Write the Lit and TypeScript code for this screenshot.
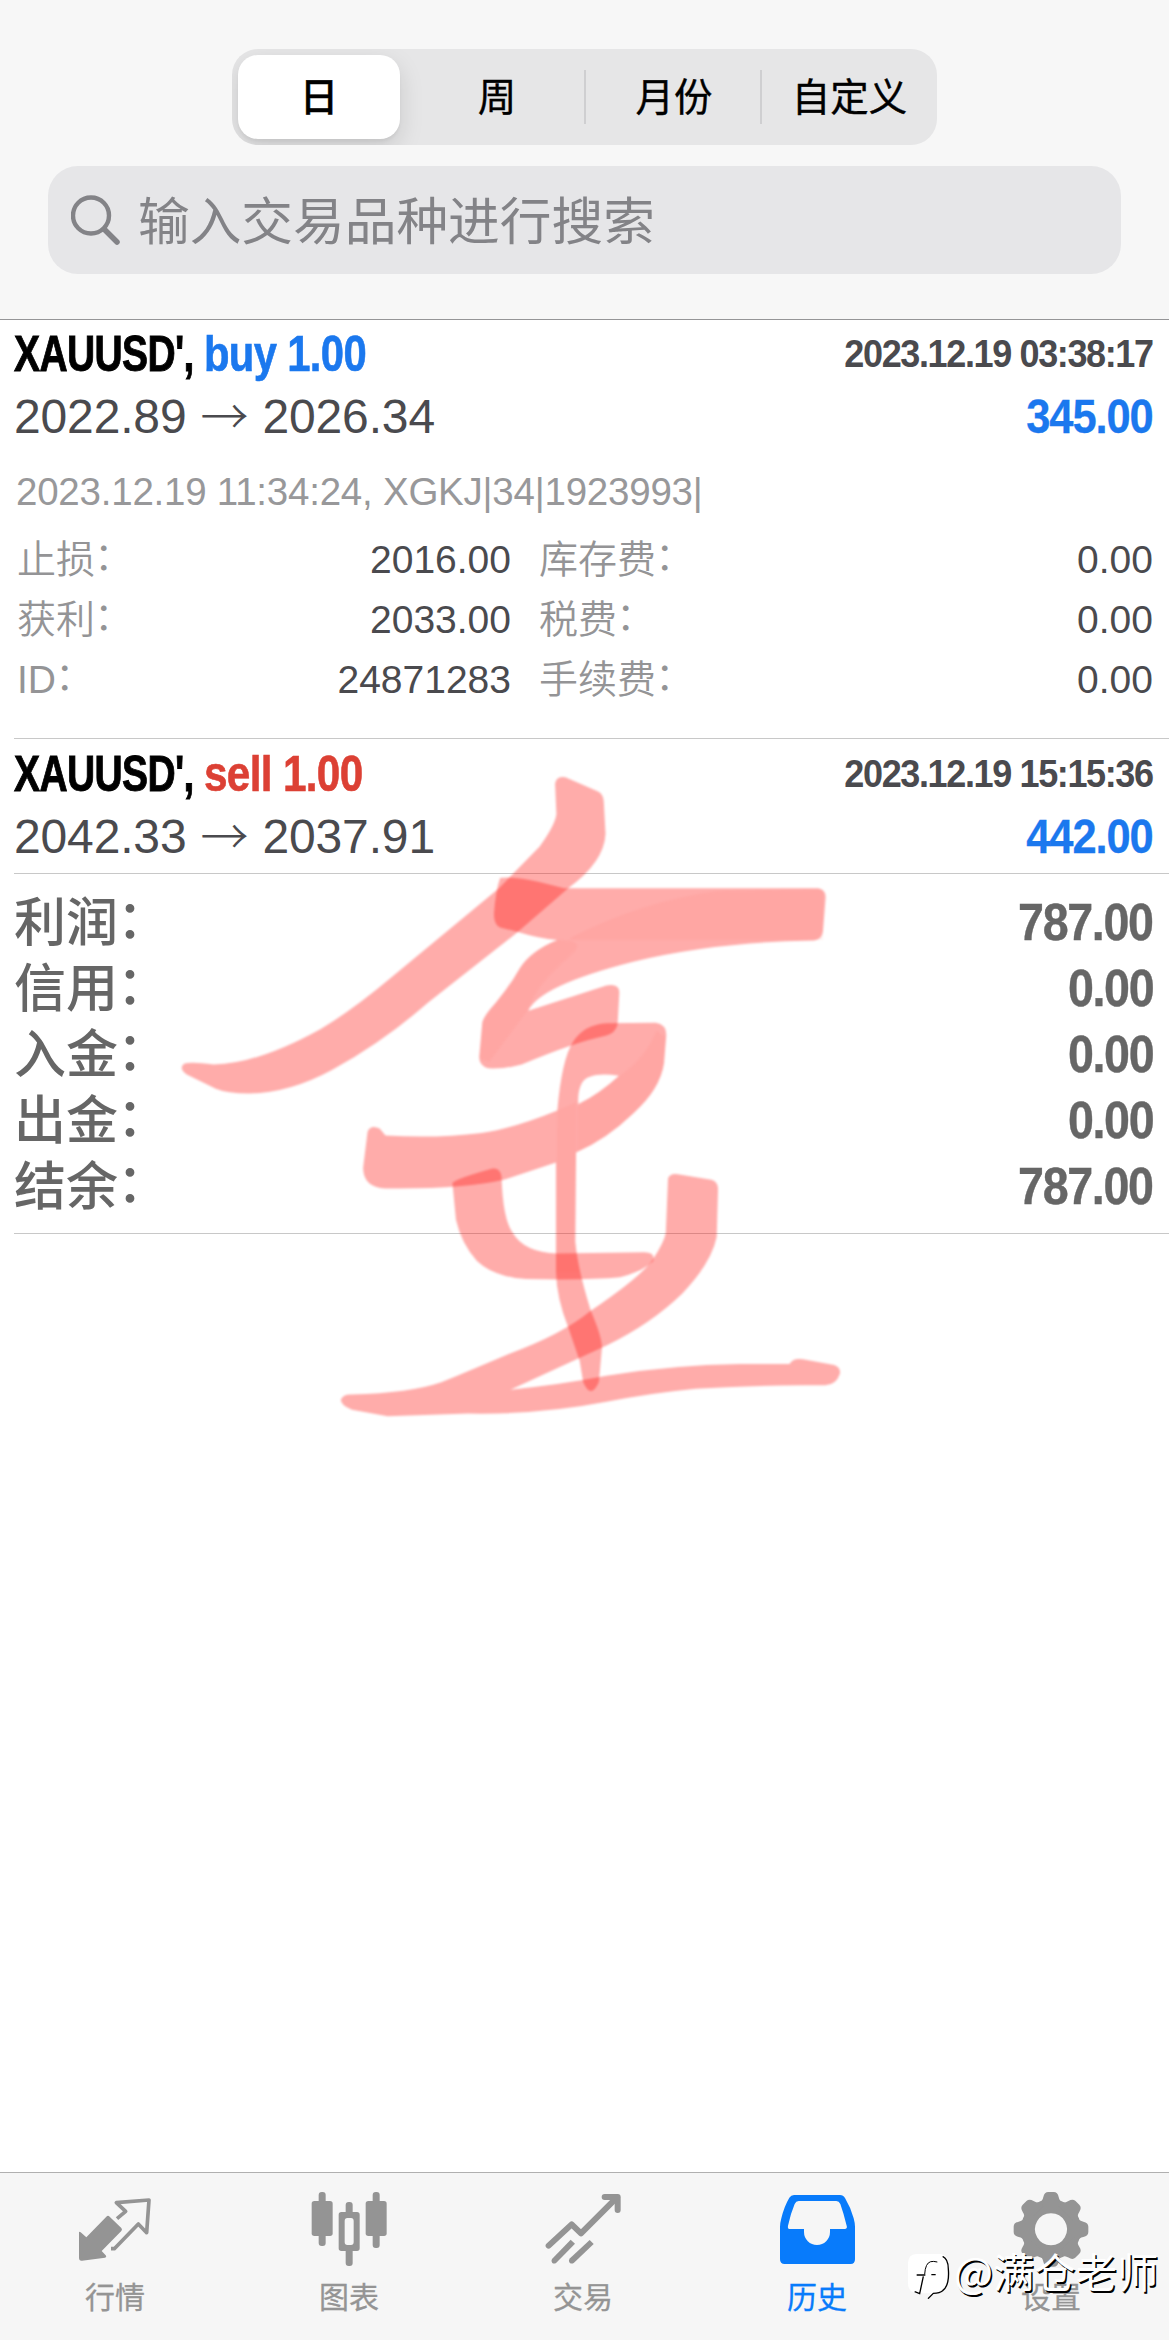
import { LitElement, html, css, svg, nothing, type TemplateResult } from 'lit'
import { customElement, property } from 'lit/decorators.js'
import { classMap } from 'lit/directives/class-map.js'

type Side = 'buy' | 'sell'

interface Deal {
  symbol: string
  side: Side
  volume: string
  open: string
  close: string
  time: string
  profit: string
  comment?: string
  details?: [string, string][]
}

interface Tab {
  label: string
  viewBox: string
  icon: TemplateResult
}

const PERIODS = ['日', '周', '月份', '自定义']

const DEALS: Deal[] = [
  {
    symbol: "XAUUSD',",
    side: 'buy',
    volume: '1.00',
    open: '2022.89',
    close: '2026.34',
    time: '2023.12.19 03:38:17',
    profit: '345.00',
    comment: '2023.12.19 11:34:24, XGKJ|34|1923993|',
    details: [
      ['止损', '2016.00'],
      ['库存费', '0.00'],
      ['获利', '2033.00'],
      ['税费', '0.00'],
      ['ID', '24871283'],
      ['手续费', '0.00'],
    ],
  },
  {
    symbol: "XAUUSD',",
    side: 'sell',
    volume: '1.00',
    open: '2042.33',
    close: '2037.91',
    time: '2023.12.19 15:15:36',
    profit: '442.00',
  },
]

const SUMMARY: [string, string][] = [
  ['利润', '787.00'],
  ['信用', '0.00'],
  ['入金', '0.00'],
  ['出金', '0.00'],
  ['结余', '787.00'],
]

const TABS: Tab[] = [
  {
    label: '行情',
    viewBox: '225 90 240 240',
    icon: svg`
      <path fill="currentColor" d="M237 218 Q237 213 242 217 L259 232 L319 170 Q324 165 329 170 L364 204 Q368 209 364 213 L305 273 L317 286 Q321 291 315 293 L246 302 Q237 303 237 293 Z" />
      <path fill="none" stroke="currentColor" stroke-width="11" stroke-linejoin="round" d="M351 176 L377 154 L349 128 L447 120 L440 218 L415 192 L343 266 H333" />
    `,
  },
  {
    label: '图表',
    viewBox: '928 90 240 240',
    icon: svg`
      <g fill="currentColor">
        <rect x="957" y="96" width="21" height="162" rx="9" />
        <rect x="936" y="123" width="63" height="105" rx="8" />
        <rect x="1119" y="96" width="21" height="168" rx="9" />
        <rect x="1098" y="123" width="63" height="105" rx="8" />
        <rect x="1038" y="126" width="21" height="46" rx="9" />
        <rect x="1038" y="260" width="21" height="58" rx="9" />
        <path fill-rule="evenodd" d="M1025 156 H1072 Q1080 156 1080 164 V265 Q1080 273 1072 273 H1025 Q1017 273 1017 265 V164 Q1017 156 1025 156 Z M1043 174 Q1035 174 1035 183 V246 Q1035 255 1043 255 H1054 Q1062 255 1062 246 V183 Q1062 174 1054 174 Z" />
      </g>
    `,
  },
  {
    label: '交易',
    viewBox: '460 90 240 240',
    icon: svg`
      <g fill="none" stroke="currentColor" stroke-width="18" stroke-linecap="round" stroke-linejoin="round">
        <path d="M477 257 L546 193 L574 220 L682 112" />
        <path d="M645 111 H684 V150" />
      </g>
      <g fill="currentColor">
        <path d="M543 239 L556 251 L500 308 Q494 313 488 309 Q483 303 487 297 Z" />
        <path d="M600 240 L612 252 L553 308 Q546 313 540 308 Q535 302 541 295 Z" />
      </g>
    `,
  },
  {
    label: '历史',
    viewBox: '-9 90 240 240',
    icon: svg`
      <path fill="currentColor" fill-rule="evenodd" d="M42 105 H180 Q190 105 195 114 Q212 142 221 175 Q225 190 225 200 V298 Q225 312 212 312 H14 Q0 312 0 298 V200 Q0 190 4 175 Q12 140 28 113 Q33 105 42 105 Z M56 123 Q48 123 44 132 Q32 160 24 197 Q22 207 30 207 H72 V216 A39 39 0 0 0 150 216 V207 H194 Q203 206 200 197 Q191 160 181 132 Q177 123 169 123 Z" />
    `,
  },
  {
    label: '设置',
    viewBox: '694 90 240 240',
    icon: svg`
      <path fill="none" stroke="currentColor" stroke-width="42" d="M814 139 A69 69 0 1 1 813.9 139 Z" />
      <g fill="currentColor">
        ${[0, 45, 90, 135, 180, 225, 270, 315].map(
          (deg) => svg`
            <path transform="rotate(${deg} 814 208)" d="M780 128 Q788 124 791 111 Q794 96 806 96 H822 Q834 96 837 111 Q840 124 848 128 V142 H780 Z" />
          `,
        )}
      </g>
    `,
  },
]

/** iOS-style segmented control for the history period. */
@customElement('period-switch')
export class PeriodSwitch extends LitElement {
  @property({ type: Number }) selected = 0

  static styles = css`
    :host {
      display: grid;
      grid-template-columns: 170px 178px 176px 1fr;
      box-sizing: border-box;
      width: 705px;
      height: 96px;
      padding: 6px 0 6px 6px;
      border-radius: 26px;
      background: #e6e6e7;
      overflow: hidden;
    }

    .segment {
      display: flex;
      align-items: center;
      justify-content: center;
      box-sizing: border-box;
      padding-top: 2px;
      font-size: 38.5px;
      line-height: 82px;
      color: #000;
      -webkit-text-stroke: 0.4px #000;
    }

    .segment.selected {
      width: 162px;
      border-radius: 20px;
      background: #fff;
      box-shadow: 0 9px 24px rgba(0, 0, 0, 0.13), 0 3px 3px rgba(0, 0, 0, 0.04);
      font-weight: 500;
    }

    .segment.divided {
      background: linear-gradient(#cfcfd1, #cfcfd1) right 15px / 2px 54px no-repeat;
    }
  `

  render() {
    return PERIODS.map(
      (label, i) => html`
        <div
          class=${classMap({
            segment: true,
            selected: i === this.selected,
            divided: i > this.selected && i < PERIODS.length - 1,
          })}
        >
          ${label}
        </div>
      `,
    )
  }
}

@customElement('deal-row')
export class DealRow extends LitElement {
  @property({ attribute: false }) deal!: Deal

  static styles = css`
    :host {
      display: block;
      color: #4a4a4e;
      white-space: nowrap;
    }

    .line {
      display: flex;
      justify-content: space-between;
      padding-right: 15px;
    }

    .title {
      height: 66px;
      line-height: 67px;
      font-weight: 700;
      letter-spacing: -0.8px;
    }

    .order {
      display: flex;
      font-size: 49.5px;
    }

    .symbol {
      width: 190px;
      color: #000;
      transform: scaleX(0.788);
      transform-origin: left;
      -webkit-text-stroke: 0.9px;
    }

    .side {
      transform: scaleX(0.845);
      transform-origin: left;
      -webkit-text-stroke: 0.6px;
    }

    .buy {
      color: #1b78ee;
    }

    .sell {
      color: #dc4034;
      transform: scaleX(0.855);
    }

    .time {
      font-size: 39px;
      letter-spacing: -1.5px;
      transform: translateX(-1px) scaleX(0.924);
      transform-origin: right;
    }

    .prices {
      height: 61px;
      line-height: 61px;
      font-size: 48px;
    }

    .route {
      display: flex;
      letter-spacing: -0.15px;
    }

    .arrow {
      width: 76px;
      text-align: center;
      font-family: 'Noto Sans CJK SC', sans-serif;
      font-weight: 300;
      line-height: 55px;
    }

    .profit {
      color: #1b78ee;
      font-weight: 700;
      letter-spacing: -1.2px;
      transform: translateX(-1px) scaleX(0.905);
      transform-origin: right;
      -webkit-text-stroke: 0.3px;
    }

    .comment {
      height: 75px;
      margin-top: 7px;
      padding-left: 2px;
      font-size: 38.5px;
      line-height: 75px;
      letter-spacing: -0.23px;
      color: #98989a;
    }

    .details {
      display: grid;
      grid-template-columns: 494px 1fr;
      column-gap: 28px;
      padding: 1px 16px 28px 3px;
      font-size: 39px;
      line-height: 60px;
    }

    .detail {
      display: flex;
      justify-content: space-between;
      height: 60px;
    }

    .name {
      color: #949496;
      font-weight: 350;
    }

    .colon {
      margin-left: -1px;
      vertical-align: 3px;
      line-height: 1;
    }
  `

  render() {
    const d = this.deal
    return html`
      <div class="line title">
        <div class="order">
          <span class="symbol">${d.symbol}</span>
          <span class="side ${d.side}">${d.side} ${d.volume}</span>
        </div>
        <span class="time">${d.time}</span>
      </div>
      <div class="line prices">
        <div class="route">
          <span>${d.open}</span><span class="arrow">→</span><span>${d.close}</span>
        </div>
        <span class="profit">${d.profit}</span>
      </div>
      ${d.comment ? html`<div class="comment">${d.comment}</div>` : nothing}
      ${d.details
        ? html`
            <div class="details">
              ${d.details.map(
                ([name, value]) => html`
                  <div class="detail">
                    <span class="name">${name}<span class="colon">：</span></span>
                    <span>${value}</span>
                  </div>
                `,
              )}
            </div>
          `
        : nothing}
    `
  }
}

// Translucent marker strokes laid over the list. Each stroke is one closed
// outline, so only crossings between different strokes get darker.
@customElement('marker-drawing')
export class MarkerDrawing extends LitElement {
  static styles = css`
    :host {
      position: absolute;
      left: 160px;
      top: 760px;
      width: 700px;
      height: 680px;
      pointer-events: none;
    }

    svg {
      display: block;
      width: 100%;
      height: 100%;
      filter: blur(1.1px);
    }

    .stroke {
      fill: rgba(255, 12, 5, 0.34);
    }

    .pooled {
      fill: rgba(255, 80, 70, 0.07);
    }
  `

  render() {
    return html`
      <svg viewBox="0 0 1568 1568" preserveAspectRatio="none">
        <path class="stroke" d="M885 55 Q888 35 908 40 L980 72 Q993 78 994 95 L998 170 Q995 235 915 295 L800 398 L600 560 Q500 650 385 715 Q290 768 200 769 Q150 769 125 758 L60 725 Q40 710 55 700 Q70 695 120 702 Q220 700 360 620 Q430 578 520 500 L760 295 L850 200 Q885 150 888 125 Z" />
        <path class="stroke" d="M762 272 Q800 265 905 296 H1475 Q1492 300 1491 318 L1485 395 Q1482 415 1465 416 Q1240 420 1060 465 Q850 520 825 578 L1000 520 Q1028 515 1029 535 L1025 610 Q1020 630 1000 635 Q930 650 810 702 Q770 713 735 711 Q715 705 715 685 L722 605 Q725 590 752 560 Q785 520 806 480 Q830 440 890 415 Q850 412 800 396 L762 386 Q748 380 748 355 Q752 300 762 272 Z" />
        <path class="stroke" fill-rule="evenodd" d="M465 857 Q472 840 492 850 L505 866 Q620 873 720 860 Q790 850 890 808 Q900 690 925 650 Q950 610 1000 607 L1110 606 Q1135 610 1134 635 L1129 700 Q1120 760 1060 815 Q1000 875 932 905 L930 1110 Q935 1170 965 1270 Q990 1330 990 1355 L983 1435 Q965 1475 948 1435 L940 1385 L915 1310 Q888 1240 887 1180 V928 L770 968 Q680 990 505 988 Q455 985 455 940 Z M1028 728 Q960 718 945 745 Q935 765 937 793 Q985 770 1028 728 Z" />
        <path class="stroke" d="M655 975 Q665 965 745 942 Q762 940 765 960 Q768 1060 790 1090 Q815 1135 890 1138 L1085 1135 Q1110 1135 1105 1155 Q1080 1180 1030 1193 Q960 1200 820 1197 Q750 1193 710 1155 Q675 1115 663 1060 Z" />
        <path class="stroke" d="M1138 965 Q1142 952 1160 955 L1235 968 Q1250 972 1250 990 L1247 1100 Q1235 1160 1170 1230 Q1100 1300 1000 1350 L785 1452 Q900 1440 1000 1420 Q1150 1395 1300 1393 H1410 Q1418 1378 1440 1382 L1510 1395 Q1525 1400 1523 1415 Q1515 1440 1490 1442 Q1350 1440 1200 1450 Q1100 1460 1000 1480 Q850 1510 690 1507 L510 1513 L430 1498 Q405 1488 405 1475 Q410 1462 430 1463 Q560 1460 630 1435 Q700 1405 780 1370 Q900 1325 965 1270 Q1080 1190 1105 1150 Q1130 1110 1133 1090 Z" />
        <path class="pooled" d="M920 410 Q1080 325 1250 302 L1485 298 V415 H920 Z" />
        <path class="pooled" d="M722 605 L806 480 Q850 430 890 415 Q960 415 920 450 Q840 520 822 580 L738 695 L716 690 Z" />
        <path class="pooled" d="M1030 728 Q1085 690 1112 625 L1133 640 L1128 700 Q1120 760 1060 815 Q1000 870 935 903 V800 Z" />
        <path class="pooled" d="M890 808 L932 790 V1110 L940 1180 H888 Z" />
      </svg>
    `
  }
}

@customElement('tab-bar')
export class TabBar extends LitElement {
  @property({ type: Number }) active = 0

  static styles = css`
    :host {
      display: grid;
      grid-template-columns: repeat(5, 234px);
      box-sizing: border-box;
      height: 168px;
      padding-top: 17px;
      border-top: 1px solid #b0b0b0;
      background: #f6f6f6;
    }

    .tab {
      display: flex;
      flex-direction: column;
      align-items: center;
      gap: 8px;
      margin-left: -4px;
      color: #949494;
      font-size: 30px;
      line-height: 40px;
      -webkit-text-stroke: 0.3px;
    }

    .tab.active {
      color: #087bfb;
    }

    svg {
      display: block;
      width: 80px;
      height: 80px;
    }
  `

  render() {
    return TABS.map(
      (tab, i) => html`
        <div class=${classMap({ tab: true, active: i === this.active })}>
          <svg viewBox=${tab.viewBox}>${tab.icon}</svg>
          <span>${tab.label}</span>
        </div>
      `,
    )
  }
}

@customElement('app-root')
export class AppRoot extends LitElement {
  static styles = css`
    :host {
      position: relative;
      display: flex;
      flex-direction: column;
      width: 1169px;
      height: 2340px;
      overflow: hidden;
      background: #fff;
      font-family: 'Liberation Sans', 'Noto Sans CJK SC', sans-serif;
    }

    .header {
      display: flex;
      flex-direction: column;
      align-items: center;
      gap: 21px;
      padding: 49px 0 45px;
      border-bottom: 1px solid #959597;
      background: #f7f7f7;
    }

    .search {
      display: flex;
      align-items: center;
      gap: 17px;
      box-sizing: border-box;
      width: 1073px;
      height: 108px;
      padding-left: 23px;
      border-radius: 30px;
      background: #e6e6e8;
      color: #838387;
      font-size: 51.7px;
      line-height: 108px;
    }

    .search svg {
      width: 50px;
      height: 50px;
    }

    .placeholder {
      padding-top: 3px;
    }

    .history {
      flex: 1;
      padding-left: 14px;
    }

    .deal {
      border-bottom: 1px solid #c8c8c8;
    }

    .deal + .deal {
      padding: 1px 0 6px;
    }

    .summary {
      padding: 15px 15px 14px 0;
      border-bottom: 1px solid #c8c8c8;
      color: #666;
      font-size: 51.5px;
      font-weight: 700;
      line-height: 66px;
    }

    .total {
      display: flex;
      justify-content: space-between;
      height: 66px;
    }

    .total-name {
      padding-top: 1px;
      font-size: 52px;
      font-weight: 500;
    }

    .colon {
      margin-left: -1px;
      vertical-align: 3px;
      line-height: 1;
    }

    .amount {
      letter-spacing: -1.5px;
      transform: translateX(-1px) scaleX(0.905);
      transform-origin: right;
      -webkit-text-stroke: 0.4px;
    }

    .watermark {
      position: absolute;
      left: 908px;
      top: 2249px;
      display: flex;
      align-items: flex-start;
      gap: 4px;
      color: #fff;
      font: 41.3px/42px 'Noto Sans CJK SC', sans-serif;
      text-shadow: 1.5px 1.5px 0.5px #000;
      white-space: nowrap;
    }

    .watermark svg {
      width: 42px;
      height: 50px;
    }
  `

  render() {
    return html`
      <div class="header">
        <period-switch></period-switch>
        <div class="search">
          <svg viewBox="0 0 50 50" fill="none" stroke="currentColor" stroke-linecap="round">
            <circle cx="20" cy="20.5" r="18" stroke-width="4.4" />
            <path stroke-width="5.5" d="M33.5 34.5 L46 47" />
          </svg>
          <span class="placeholder">输入交易品种进行搜索</span>
        </div>
      </div>
      <div class="history">
        ${DEALS.map((deal) => html`<div class="deal"><deal-row .deal=${deal}></deal-row></div>`)}
        <div class="summary">
          ${SUMMARY.map(
            ([name, amount]) => html`
              <div class="total">
                <span class="total-name">${name}<span class="colon">：</span></span>
                <span class="amount">${amount}</span>
              </div>
            `,
          )}
        </div>
      </div>
      <tab-bar active="3"></tab-bar>
      <marker-drawing></marker-drawing>
      <div class="watermark">
        <svg viewBox="24 30 126 150">
          <path fill="#fff" d="M48 45 H122 Q147 49 147 80 V125 Q145 158 108 163 L84 180 L92 163 H50 Q24 160 24 132 V72 Q25 46 48 45 Z" />
          <g fill="none" stroke="#000">
            <path stroke-width="4" d="M128 52 Q145 60 145 90 Q149 140 128 155 Q120 162 100 163 L84 179" />
            <path stroke-width="3" d="M74 106 Q76 72 92 68 Q100 66 112 69" />
            <path stroke-width="4" d="M50 108 H76 M94 107 H107 M70 112 L59 164 L44 158" />
          </g>
        </svg>
        <span>@满仓老师</span>
      </div>
    `
  }
}

declare global {
  interface HTMLElementTagNameMap {
    'app-root': AppRoot
    'period-switch': PeriodSwitch
    'deal-row': DealRow
    'marker-drawing': MarkerDrawing
    'tab-bar': TabBar
  }
}
